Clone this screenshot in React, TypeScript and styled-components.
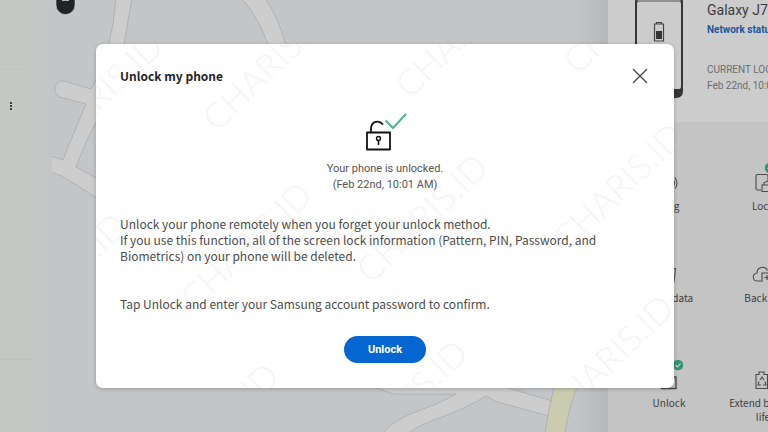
import React from "react";
import styled, { createGlobalStyle } from "styled-components";

const GlobalStyle = createGlobalStyle`
  * { box-sizing: border-box; }
  body {
    margin: 0;
    font-family: "Noto Sans CJK SC", "Noto Sans", sans-serif;
    color: #3c3c3c;
  }
  h1, h2, p { margin: 0; padding: 0; }
`;

const compactFont = `Roboto, "Liberation Sans", sans-serif`;

const Page = styled.main`
  position: relative;
  display: grid;
  grid-template-columns: 52px minmax(0, 1fr) 160px;
  height: 100vh;
  overflow: hidden;
  background: #c2c6c9;
`;

const Sidebar = styled.aside`
  display: flex;
  flex-direction: column;
  background: linear-gradient(90deg, #c5c7c5 80%, #c2c6c7);
`;

const DeviceSlot = styled.div<{ $height: number; $rule: number }>`
  display: flex;
  align-items: flex-start;
  height: ${(p) => p.$height}px;
  width: ${(p) => p.$rule}px;
  padding-top: 29px;
  border-bottom: 1px solid #bec0be;
`;

const MoreButton = styled.button`
  display: flex;
  margin-left: 5px;
  padding: 0;
  border: 0;
  background: none;
`;

const MapArea = styled.div`
  min-width: 0;
  overflow: hidden;
  background: linear-gradient(90deg, #c2c6c9 94%, #b4b8ba);

  svg { display: block; width: 100%; height: 100%; }
`;

const Panel = styled.section`
  display: flex;
  flex-direction: column;
  overflow: hidden;
  background: #c4c4c4;
`;

const DeviceHeader = styled.header`
  display: flex;
  gap: 23px;
  height: 122px;
  padding-left: 26px;
  background: #cccccc;
  font-family: ${compactFont};
  white-space: nowrap;

  svg { flex: none; }
`;

const DeviceInfo = styled.div`
  display: flex;
  flex-direction: column;
  align-items: flex-start;
`;

const DeviceName = styled.h2`
  font-size: 14px;
  font-weight: 400;
  line-height: 20px;
`;

const NetworkLink = styled.a`
  margin-bottom: 22px;
  color: #1a57a0;
  font-size: 10px;
  font-weight: 700;
  line-height: 20px;
  text-decoration: none;
`;

const Meta = styled.p`
  color: #6c6c6c;
  font-size: 10px;
  line-height: 16px;
`;

const Actions = styled.div`
  display: grid;
  grid-template-columns: 94px 94px;
  grid-template-rows: 92px 105px auto;
  padding: 40px 0 0 14px;
`;

const Action = styled.button`
  display: flex;
  flex-direction: column;
  align-items: center;
  justify-content: flex-start;
  gap: 5px;
  padding: 0 8px;
  border: 0;
  background: none;
  color: #404040;
  font: inherit;
  font-size: 10px;
  line-height: 14px;
`;

const Overlay = styled.div`
  position: absolute;
  inset: 0;
  display: flex;
  align-items: center;
  padding: 0 94px 0 96px;
`;

const DialogFrame = styled.div`
  display: flex;
  flex: 1;
  border-radius: 7px;
  box-shadow: 0 1px 4px rgba(0, 0, 0, 0.22);
`;

const Dialog = styled.div`
  position: relative;
  flex: 1;
  overflow: hidden;
  padding: 20px 24px 25px;
  border-radius: 7px;
  background: #ffffff;
`;

const Watermark = styled.span<{ $x: number; $y: number }>`
  position: absolute;
  left: ${(p) => p.$x}px;
  top: ${(p) => p.$y}px;
  transform: translate(-50%, -50%) rotate(-44deg);
  color: #f5f5f5;
  font-family: Lato, sans-serif;
  font-size: 35px;
  line-height: 36px;
  font-weight: 300;
  pointer-events: none;
`;

const DialogContent = styled.div`
  position: relative;
  display: flex;
  flex-direction: column;
`;

const TitleRow = styled.div`
  display: flex;
  align-items: center;
  justify-content: space-between;
  height: 24px;
`;

const Title = styled.h1`
  color: #252525;
  font-size: 12px;
  font-weight: 700;
  line-height: 20px;
`;

const CloseButton = styled.button`
  display: flex;
  padding: 0;
  border: 0;
  background: none;
`;

const Status = styled.div`
  display: flex;
  flex-direction: column;
  align-items: center;
  margin-top: 24px;
  color: #555555;
  font-family: ${compactFont};
  font-size: 11px;
  line-height: 16px;

  svg { margin-bottom: 5px; }
`;

const Paragraph = styled.p`
  margin-top: 23px;
  color: #4c4c4c;
  font-size: 12px;
  line-height: 16px;

  & + & { margin-top: 32px; }
`;

const UnlockButton = styled.button`
  align-self: center;
  width: 82px;
  height: 27px;
  margin-top: 24px;
  padding: 0;
  border: 0;
  border-radius: 14px;
  background: #0565d1;
  color: #ffffff;
  font-family: ${compactFont};
  font-size: 11px;
  font-weight: 700;
  line-height: 16px;
`;

const watermarks = [
  [0, 52], [171, 21], [364, -12], [532, -36],
  [-36, 232], [149, 201], [325, 173], [521, 142],
  [116, 382], [305, 359], [511, 314],
];

const iconStroke = { fill: "none", stroke: "#4a4a4a", strokeWidth: 1.1 };

const Badge = ({ cx, cy }: { cx: number; cy: number }) => (
  <g>
    <circle cx={cx} cy={cy} r="5.2" fill="#2f9270" stroke="none" />
    <path d={`M${cx - 2.5} ${cy}l2 2 3-3.5`} fill="none" stroke="#d0dcd6" strokeWidth="1.1" />
  </g>
);

const RingIcon = () => (
  <svg width="32" height="32" {...iconStroke}>
    <path d="M12 17v8h3l5 4V13l-5 4zM20 17q3 4 0 8M22 15.500q4 6 0 11" />
  </svg>
);

const LockIcon = () => (
  <svg width="32" height="32" {...iconStroke}>
    <path d="M14 28h-3.500q-1.500 0-1.500-1.500V14q0-1.500 1.500-1.500h9q1.500 0 1.500 1.500v5" />
    <path d="M15 23h10v6.500H15zM17 23v-2q3-3 6 0v2" />
    <Badge cx={23} cy={6} />
  </svg>
);

const EraseIcon = () => (
  <svg width="32" height="32" {...iconStroke}>
    <path d="M9 14.500h14M22.500 14l-1.500 14h-9l-1.500-14M13 14v-2h6v2" />
  </svg>
);

const BackupIcon = () => (
  <svg width="32" height="32" {...iconStroke}>
    <path d="M14 27h-3.500a4 4 0 0 1-.5-8 5.500 5.500 0 0 1 10.500-2.500" />
    <path d="M27 19h-12v9M17.500 23.500h5M20 21v5" />
  </svg>
);

const UnlockIcon = () => (
  <svg width="32" height="32" {...iconStroke}>
    <path d="M8.500 18h14.500v11.500H8.500zM11 18v-3q4-6 8-1" strokeWidth="1.4" />
    <Badge cx={25} cy={6} />
  </svg>
);

const BatteryIcon = () => (
  <svg width="32" height="32" {...iconStroke}>
    <path d="M9 15.500h3v-2.500h5v2.500h3.500V29.500H9zM13 21l2-3 2 3M12 22.500l-1 3.500h3M18 22.500l1 3.500h-3" />
  </svg>
);

const actions = [
  { label: "Ring", Icon: RingIcon },
  { label: "Lock", Icon: LockIcon },
  { label: "Erase data", Icon: EraseIcon },
  { label: "Back up", Icon: BackupIcon },
  { label: "Unlock", Icon: UnlockIcon },
  { label: "Extend battery life", Icon: BatteryIcon },
];

const StreetMap = () => (
  <svg viewBox="52 0 556 432" preserveAspectRatio="xMinYMin slice" aria-hidden="true">
    <g fill="#cdcdcd" stroke="#a9abac" strokeWidth="0.8">
      <path d="M116-2Q114 25 108 48L96 80 91 89 64 81C54 80 52 94 60 97L86 104 71 140 63 160 48 155V171L62 176 100 200V180L76 167 86 142 110 95 124 44 132-2z" />
      <path d="M241-2Q258 15 270 50H287Q280 20 265-2z" />
      <path d="M374 387 393 394H456Q447 400 423 409 392 420 382 434H407Q420 424 445 416 470 406 486 396 498 404 512 406L552 417 556 402 508 388 500 380z" />
      <path d="M555 385Q549 405 545 434H565Q568 409 578 385z" fill="#cbcbb0" />
    </g>
    <path d="M56-5H75V5A9 9 0 0 1 56 5z" fill="#1d2529" stroke="#d0d3d4" strokeWidth="0.6" />
    <path d="M62 0.500h7" stroke="#aeb3b5" />
  </svg>
);

const PhonePicture = () => (
  <svg width="50" height="100" aria-hidden="true">
    <path d="M1 88H49V91Q49 98 42 98H8Q1 98 1 91z" fill="#353535" />
    <rect x="2" y="-1" width="46" height="91" rx="3" fill="#cccccc" stroke="#353535" strokeWidth="2" />
    <path d="M3 3Q3 1 5 1H45Q47 1 47 3" fill="none" stroke="#555555" />
    <path d="M20.500 24h9v17h-9zM22.500 24v-1.500h5V24" fill="none" stroke="#444444" strokeWidth="1.2" />
    <path d="M22 31h6v8h-6z" fill="#333333" />
  </svg>
);

export default function App() {
  return (
    <>
      <GlobalStyle />
      <Page>
        <Sidebar>
          <DeviceSlot $height={70} $rule={24} />
          <DeviceSlot $height={290} $rule={32}>
            <MoreButton aria-label="More options">
              <svg width="12" height="14" fill="#222222">
                <circle cx="6" cy="4" r="1.1" />
                <circle cx="6" cy="7" r="1.1" />
                <circle cx="6" cy="10" r="1.1" />
              </svg>
            </MoreButton>
          </DeviceSlot>
        </Sidebar>
        <MapArea>
          <StreetMap />
        </MapArea>
        <Panel>
          <DeviceHeader>
            <PhonePicture />
            <DeviceInfo>
              <DeviceName>Galaxy J7</DeviceName>
              <NetworkLink href="#network">Network status</NetworkLink>
              <Meta>CURRENT LOCATION</Meta>
              <Meta>Feb 22nd, 10:01 AM</Meta>
            </DeviceInfo>
          </DeviceHeader>
          <Actions>
            {actions.map(({ label, Icon }) => (
              <Action key={label}>
                <Icon />
                {label}
              </Action>
            ))}
          </Actions>
        </Panel>
        <Overlay>
          <DialogFrame>
            <Dialog role="dialog" aria-labelledby="unlock-title">
              {watermarks.map(([x, y]) => (
                <Watermark key={`${x}:${y}`} $x={x} $y={y} aria-hidden="true">
                  CHARIS.ID
                </Watermark>
              ))}
              <DialogContent>
                <TitleRow>
                  <Title id="unlock-title">Unlock my phone</Title>
                  <CloseButton aria-label="Close">
                    <svg width="20" height="20">
                      <path d="M3 3 17 17M17 3 3 17" stroke="#444444" strokeWidth="1.3" />
                    </svg>
                  </CloseButton>
                </TitleRow>
                <Status>
                  <svg width="56" height="44" fill="none" stroke="#111111" aria-hidden="true">
                    <path d="M10 20.500h23v17H10z" strokeWidth="1.8" strokeLinejoin="round" />
                    <path d="M14 20V17C14 9 22 7.500 26 12.500" strokeWidth="1.8" />
                    <circle cx="21.5" cy="26.5" r="2" strokeWidth="1.4" />
                    <path d="M21.500 28.500V33" strokeWidth="1.6" />
                    <path d="M28.500 8.500 36 16 49 2" stroke="#4bb58f" strokeWidth="2" />
                  </svg>
                  <p>Your phone is unlocked.</p>
                  <p>(Feb 22nd, 10:01 AM)</p>
                </Status>
                <Paragraph>
                  Unlock your phone remotely when you forget your unlock method.
                  <br />
                  If you use this function, all of the screen lock information (Pattern, PIN,
                  Password, and Biometrics) on your phone will be deleted.
                </Paragraph>
                <Paragraph>
                  Tap Unlock and enter your Samsung account password to confirm.
                </Paragraph>
                <UnlockButton>Unlock</UnlockButton>
              </DialogContent>
            </Dialog>
          </DialogFrame>
        </Overlay>
      </Page>
    </>
  );
}
